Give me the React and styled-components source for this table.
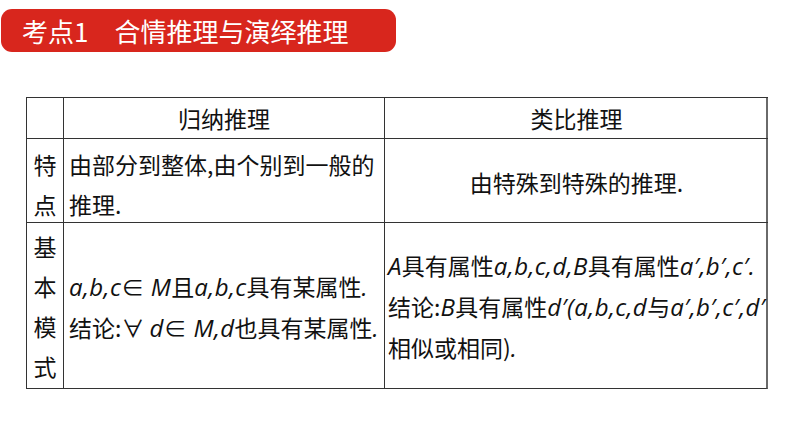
import React from "react";
import styled, { createGlobalStyle } from "styled-components";

const Global = createGlobalStyle`
  html, body { margin: 0; padding: 0; background: #fff; }
  body { font-family: "Noto Sans CJK SC", "Noto Sans", sans-serif; color: #111; }
`;

const Page = styled.div`
  width: 794px;
  height: 447px;
  padding-top: 9px;
  box-sizing: border-box;
  overflow: hidden;
`;

const TitleBar = styled.div`
  margin-left: 1px;
  width: 395px;
  height: 43px;
  background: #d8261d;
  border-radius: 11px;
  display: flex;
  align-items: center;
  padding-left: 21px;
  box-sizing: border-box;
  color: #fff;
  font-size: 26px;
  font-family: "Noto Sans CJK SC", sans-serif;
`;

const TitleTag = styled.span`
  margin-right: 26px;
`;

const Table = styled.div`
  margin-top: 45px;
  margin-left: 26px;
  width: 742px;
  display: grid;
  grid-template-columns: 37px 321px 384px;
  grid-template-rows: 41px 84px 166px;
  border-right: 2px solid #6a6a6a;
  border-bottom: 1px solid #333;
  box-sizing: border-box;
`;

const Cell = styled.div`
  border-left: 1px solid #333;
  border-top: 1px solid #333;
  box-sizing: border-box;
  font-size: 23px;
  line-height: 40px;
  overflow: hidden;
  display: flex;
  flex-direction: column;
  justify-content: center;
  align-items: ${(p) => (p.$center ? "center" : "flex-start")};
  padding-left: ${(p) => p.$pad ?? 0}px;
  padding-top: ${(p) => p.$top ?? 0}px;
  white-space: nowrap;
`;

const SideLabel = styled(Cell)`
  align-items: center;
  padding-left: 0;
`;

const Line = styled.div`
  white-space: nowrap;
`;

const M = styled.span`
  font-family: "Open Sans", "Noto Sans", sans-serif;
  font-style: italic;
  font-size: 24px;
  letter-spacing: 0.4px;
`;

export default function App() {
  return (
    <Page>
      <Global />
      <TitleBar>
        <TitleTag>考点1</TitleTag>
        <span>合情推理与演绎推理</span>
      </TitleBar>
      <Table>
        <Cell />
        <Cell $center>归纳推理</Cell>
        <Cell $center>类比推理</Cell>

        <SideLabel $top={6}>
          <Line>特</Line>
          <Line>点</Line>
        </SideLabel>
        <Cell $pad={5} $top={6}>
          <Line>由部分到整体,由个别到一般的</Line>
          <Line>推理.</Line>
        </Cell>
        <Cell $center $top={2}>由特殊到特殊的推理.</Cell>

        <SideLabel>
          <Line>基</Line>
          <Line>本</Line>
          <Line>模</Line>
          <Line>式</Line>
        </SideLabel>
        <Cell $pad={5} $top={2}>
          <Line>
            <M>a,b,c</M>∈<M> M</M>且<M>a,b,c</M>具有某属性<M>.</M>
          </Line>
          <Line>
            结论:∀ <M>d</M>∈<M> M,d</M>也具有某属性<M>.</M>
          </Line>
        </Cell>
        <Cell $pad={3} $top={2}>
          <Line>
            <M>A</M>具有属性<M>a,b,c,d,B</M>具有属性<M>a′,b′,c′.</M>
          </Line>
          <Line>
            结论:<M>B</M>具有属性<M>d′(a,b,c,d</M>与<M>a′,b′,c′,d′</M>
          </Line>
          <Line>
            相似或相同)<M>.</M>
          </Line>
        </Cell>
      </Table>
    </Page>
  );
}
